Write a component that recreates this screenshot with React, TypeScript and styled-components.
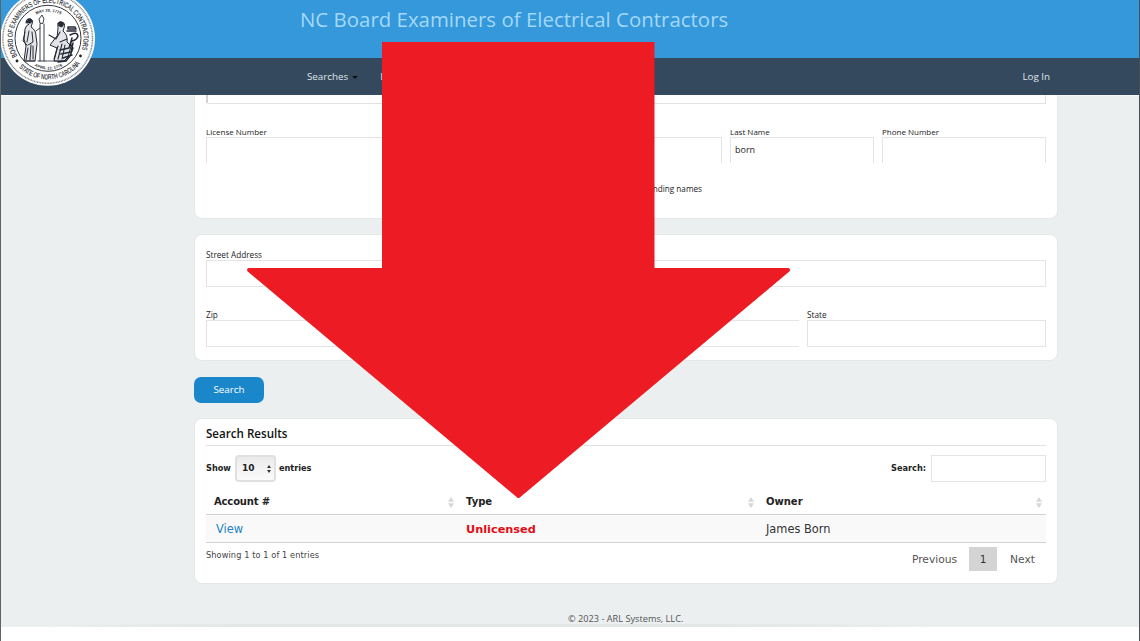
import React from "react";
import styled, { createGlobalStyle, css } from "styled-components";

const Global = createGlobalStyle`
  * { box-sizing: border-box; }
  body { margin: 0; background: #fff; overflow: hidden; }
`;

const nunito = `"Open Sans", "Noto Sans", sans-serif`;
const verdana = `"DejaVu Sans", sans-serif`;

const Page = styled.div`
  position: relative;
  width: 1140px;
  height: 641px;
  overflow: hidden;
  display: flex;
  flex-direction: column;
  background: #fff;
  border-left: 1px solid #5d6468;
  border-right: 1px solid #4b4f52;
  font-family: ${nunito};
  color: #222;
  line-height: 1;
`;

const Screen = styled.div`
  height: 627px;
  display: flex;
  flex-direction: column;
  background: #ebeff0;
`;

const Label = styled.span<{ $size: number; $w?: number; $track?: number; $color?: string; $wide?: boolean }>`
  display: block;
  white-space: nowrap;
  font-size: ${(p) => p.$size}px;
  font-weight: ${(p) => p.$w ?? 400};
  letter-spacing: ${(p) => p.$track ?? 0}px;
  color: ${(p) => p.$color ?? "inherit"};
  ${(p) => p.$wide && css`font-family: ${verdana};`}
`;

const Header = styled.header`
  flex: none;
  height: 58px;
  padding: 9px 0 0 299px;
  background: #3498db;
`;

const Nav = styled.nav`
  flex: none;
  height: 37px;
  display: flex;
  align-items: center;
  padding: 0 89px 0 306px;
  background: #34495e;
  box-shadow: 0 1px #f6f8f8;
  color: #dfe5ea;
`;

const Caret = styled.i`
  margin: 2px 22px 0 4px;
  border: 3px solid transparent;
  border-top-color: #0c1016;
  border-bottom: 0;
`;

const Spacer = styled.div`
  flex: 1;
`;

const Main = styled.main`
  width: 864px;
  margin-left: 193px;
  display: flex;
  flex-direction: column;
  align-items: flex-start;
`;

const Card = styled.section<{ $h: number; $top?: boolean }>`
  width: 100%;
  height: ${(p) => p.$h}px;
  padding: 0 11px;
  border: 1px solid #e4e8e9;
  border-radius: ${(p) => (p.$top ? "0 0 8px 8px" : "8px")};
  ${(p) => p.$top && css`border-top: 0; margin-bottom: 15px;`}
  background: #fff;
`;

const SelectBottom = styled.div`
  height: 9px;
  border: 1px solid #e2e2e2;
  border-top: 0;
  border-left: 2px solid #d2d2d2;
  border-bottom-left-radius: 3px;
`;

const Fields = styled.div<{ $mt: number; $cols: string }>`
  display: grid;
  grid-template-columns: ${(p) => p.$cols};
  column-gap: 8px;
  margin-top: ${(p) => p.$mt}px;
`;

const Field = styled.label`
  display: flex;
  flex-direction: column;
`;

const FieldName = styled(Label)`
  height: 11px;
  line-height: 11px;
`;

const Box = styled.div<{ $open?: "bottom" | "right" }>`
  height: ${(p) => (p.$open === "bottom" ? 26 : 27)}px;
  padding: 7px 4px;
  border: 1px solid #e4e4e4;
  ${(p) => p.$open === "bottom" && css`border-bottom: 0;`}
  ${(p) => p.$open === "right" && css`border-right: 0;`}
`;

const Pending = styled.div`
  margin: 22px 0 0 407px;
`;

const SearchButton = styled.button`
  display: flex;
  align-items: center;
  justify-content: center;
  width: 70px;
  height: 26px;
  margin: 16px 0 15px;
  padding: 0 0 1px;
  border: 0;
  border-radius: 7px;
  background: #1a87cb;
  color: #fff;
  font-family: ${nunito};
  line-height: 1;
`;

const ResultsTitle = styled.div`
  height: 27px;
  padding-top: 9px;
  border-bottom: 1px solid #e2e2e2;
`;

const Controls = styled.div`
  display: flex;
  align-items: center;
  height: 27px;
  margin-top: 9px;
`;

const PageSize = styled.div`
  width: 41px;
  height: 27px;
  margin: 0 3px 0 4px;
  padding: 0 3px 0 5px;
  display: flex;
  align-items: center;
  justify-content: space-between;
  border: 2px solid #e0e0e0;
  border-radius: 4px;
  background: linear-gradient(#ebebeb, #fbfbfb);
`;

const SearchBox = styled.div`
  width: 115px;
  height: 27px;
  margin-left: 5px;
  border: 1px solid #e4e4e4;
`;

const Row = styled.div<{ $body?: boolean }>`
  display: grid;
  grid-template-columns: 252px 300px 1fr;
  align-items: center;
  height: ${(p) => (p.$body ? 28 : 33)}px;
  padding-top: ${(p) => (p.$body ? 3 : 8)}px;
  border-bottom: 1px solid #d2d2d2;
  background: ${(p) => (p.$body ? "#f9f9f9" : "#fff")};
`;

const Cell = styled.div<{ $pad?: number }>`
  display: flex;
  align-items: center;
  justify-content: space-between;
  padding: 0 4px 0 ${(p) => p.$pad ?? 8}px;
`;

const Foot = styled.div`
  display: flex;
  align-items: flex-start;
`;

const Info = styled.div`
  padding-top: 8px;
`;

const Pager = styled.div`
  display: flex;
  align-items: center;
  height: 24px;
  margin-top: 4px;
  padding-right: 11px;
  color: #555;
`;

const PageLink = styled(Label)`
  padding-top: 2px;
`;

const Current = styled.div`
  display: flex;
  align-items: center;
  justify-content: center;
  width: 28px;
  height: 24px;
  margin: 0 13px 0 12px;
  background: #d4d4d4;
  color: #333;
`;

const Copyright = styled.footer`
  flex: 1;
  padding: 30px 0 0 567px;
  background: linear-gradient(90deg, transparent 50px, #e2e6e7 250px, #e2e6e7 700px, transparent 930px) bottom / 100% 3px no-repeat;
`;

const Seal = styled.svg`
  position: absolute;
  left: -1px;
  top: -10px;
`;

const Arrow = styled.svg`
  position: absolute;
  left: -1px;
  top: 0;
  pointer-events: none;
`;

const Sort = () => (
  <svg width="6" height="11" viewBox="0 0 6 11" fill="#d6d6d6">
    <path d="M3 0 6 4.700H0ZM0 6.200h6L3 11Z" />
  </svg>
);

const SealArt = () => (
  <Seal width="96" height="97" viewBox="0 0 96 97">
    <defs>
      <path id="sealTop" d="M17.300 66 A35.500 35.500 0 1 1 81.400 60.400" />
      <path id="sealBottom" d="M19 77.300 A41 41 0 0 0 80.800 72.900" />
      <path id="dateTop" d="M29 30 A27 27 0 0 1 68 30" />
      <path id="dateBottom" d="M31 74 A31 31 0 0 0 66 74" />
    </defs>
    <circle cx="47.700" cy="48.500" r="47.300" fill="#fff" />
    <circle cx="47.700" cy="48.500" r="44.800" fill="none" stroke="#868a8f" strokeWidth="1.500" strokeDasharray="1 .6" />
    <circle cx="48" cy="48.300" r="33" fill="none" stroke="#34383d" strokeWidth="1" />
    <g fontFamily="Liberation Sans, sans-serif" fill="#292d33">
      <text fontSize="7.200" stroke="#292d33" strokeWidth=".15"><textPath href="#sealTop" textLength="141" lengthAdjust="spacingAndGlyphs">BOARD OF EXAMINERS OF ELECTRICAL CONTRACTORS</textPath></text>
      <text fontSize="7" stroke="#292d33" strokeWidth=".15"><textPath href="#sealBottom" textLength="69" lengthAdjust="spacingAndGlyphs">STATE OF NORTH CAROLINA</textPath></text>
      <text fontSize="4" fontWeight="700"><textPath href="#dateTop" startOffset="50%" textAnchor="middle">MAY 20, 1775</textPath></text>
      <text fontSize="4" fontWeight="700"><textPath href="#dateBottom" startOffset="50%" textAnchor="middle">APRIL 12, 1776</textPath></text>
    </g>
    <circle cx="17" cy="71" r="1.400" fill="#222" />
    <circle cx="80.500" cy="66" r="1.400" fill="#222" />
    <g fill="none" stroke="#252936" strokeLinecap="round" strokeLinejoin="round">
      <path d="M26 33q0-5 4-4q4 1 2 5l-1 3q5 3 5 9l1 8l-2 17h-11l2-15l-2-7l1-10q1-4 4-5" strokeWidth="1" fill="#e4e5e9" />
      <path d="M29 41l-2 11m5-10l1 10-5 3m0 3l-2 12m5-15l-1 15m3-14v13M25 42l-2 9 4 4" strokeWidth="1" />
      <path d="M27 31q2-4 5-1l-1 3h-4z" fill="#252936" strokeWidth=".8" />
      <path d="M40 34v37M44 34v37M40 33l-1-4 3-4 2 4-1 4zM36 41l4-3M38 71h9" strokeWidth=".9" />
      <path d="M58 37q-1-5 3-5q5 0 3 6l-1 3q5 4 4 11l4 4-3 11-4 4H54l3-13-7-3 7-9z" strokeWidth="1" fill="#e4e5e9" />
      <path d="M58 33q3-3 6 1l-2 3-3-1z" fill="#252936" strokeWidth=".8" />
      <path d="M60 42l-4 7-7-4m11 7l7-3m-9 7l-4 13m8-15l-4 15m7-14l-3 14" strokeWidth="1.100" />
      <path d="M68 37h7l1 2h-8zM67 41h9M70 45q7-4 8 1-1 4-6 5-3 3 1 7l-3 8-4 5-8 1M72 48l-3 10-9 2m13-7l-2 9-10 2m11 1l-9 3" strokeWidth="1.500" />
      <path d="M25 71h10m13 0h18" strokeWidth=".8" />
    </g>
  </Seal>
);

export default function App() {
  return (
    <Page>
      <Global />
      <Screen>
        <Header>
          <Label $size={20.4} $track={0.02} $color="#a3d8fa">NC Board Examiners of Electrical Contractors</Label>
        </Header>
        <Nav>
          <Label $size={9.8} $w={500}>Searches</Label>
          <Caret />
          <Label $size={9.8} $w={500}>Licensing</Label>
          <Spacer />
          <Label $size={9.8} $w={500}>Log In</Label>
        </Nav>
        <Main>
          <Card $h={124} $top>
            <SelectBottom />
            <Fields $mt={22} $cols="254px 254px 144px 164px">
              <Field><FieldName $size={8} $w={500}>License Number</FieldName><Box $open="bottom" /></Field>
              <Field><FieldName $size={8} $w={500}>First Name</FieldName><Box $open="bottom" /></Field>
              <Field><FieldName $size={8} $w={500}>Last Name</FieldName><Box $open="bottom"><Label $size={9}>born</Label></Box></Field>
              <Field><FieldName $size={8} $w={500}>Phone Number</FieldName><Box $open="bottom" /></Field>
            </Fields>
            <Pending><Label $size={8.2} $w={500}>Include pending names</Label></Pending>
          </Card>
          <Card $h={127}>
            <Fields $mt={14} $cols="840px">
              <Field><FieldName $size={8.2} $w={500}>Street Address</FieldName><Box /></Field>
            </Fields>
            <Fields $mt={22} $cols="289px 296px 239px">
              <Field><FieldName $size={8.2} $w={500}>Zip</FieldName><Box /></Field>
              <Field><FieldName $size={8.2} $w={500}>City</FieldName><Box $open="right" /></Field>
              <Field><FieldName $size={8.2} $w={500}>State</FieldName><Box /></Field>
            </Fields>
          </Card>
          <SearchButton><Label $size={9.8} $w={500}>Search</Label></SearchButton>
          <Card $h={166}>
            <ResultsTitle><Label $size={11.6} $w={600} $color="#111">Search Results</Label></ResultsTitle>
            <Controls>
              <Label $size={8.2} $w={700} $wide>Show</Label>
              <PageSize>
                <Label $size={9} $w={700} $wide>10</Label>
                <svg width="4" height="8" viewBox="0 0 4 8"><path d="M2 0 4 3H0ZM0 5h4L2 8Z" fill="#333" /></svg>
              </PageSize>
              <Label $size={8.2} $w={700} $wide>entries</Label>
              <Spacer />
              <Label $size={8.2} $w={700} $wide>Search:</Label>
              <SearchBox />
            </Controls>
            <Row>
              <Cell><Label $size={10} $w={700} $track={-0.15} $wide>Account #</Label><Sort /></Cell>
              <Cell><Label $size={10} $w={700} $wide>Type</Label><Sort /></Cell>
              <Cell><Label $size={10} $w={700} $wide>Owner</Label><Sort /></Cell>
            </Row>
            <Row $body>
              <Cell $pad={10}><Label $size={11.4} $wide $color="#2383c4">View</Label></Cell>
              <Cell><Label $size={11.3} $w={700} $wide $color="#e60c14">Unlicensed</Label></Cell>
              <Cell><Label $size={11.4} $wide $color="#333">James Born</Label></Cell>
            </Row>
            <Foot>
              <Info><Label $size={8.2} $track={0.1} $wide $color="#444">Showing 1 to 1 of 1 entries</Label></Info>
              <Spacer />
              <Pager>
                <PageLink $size={10.7} $wide>Previous</PageLink>
                <Current><Label $size={10.5} $wide>1</Label></Current>
                <PageLink $size={10.7} $wide>Next</PageLink>
              </Pager>
            </Foot>
          </Card>
        </Main>
        <Copyright><Label $size={9.2} $color="#555">© 2023 - ARL Systems, LLC.</Label></Copyright>
      </Screen>
      <SealArt />
      <Arrow width="1140" height="641" viewBox="0 0 1140 641">
        <path d="M382 42H654.500V268H788L518.500 498 248.500 268H382Z" fill="#ed1c24" />
        <path d="M382 270H249L518.500 496 788 270H654" fill="none" stroke="#ed1c24" strokeWidth="4" strokeLinejoin="round" />
      </Arrow>
    </Page>
  );
}
